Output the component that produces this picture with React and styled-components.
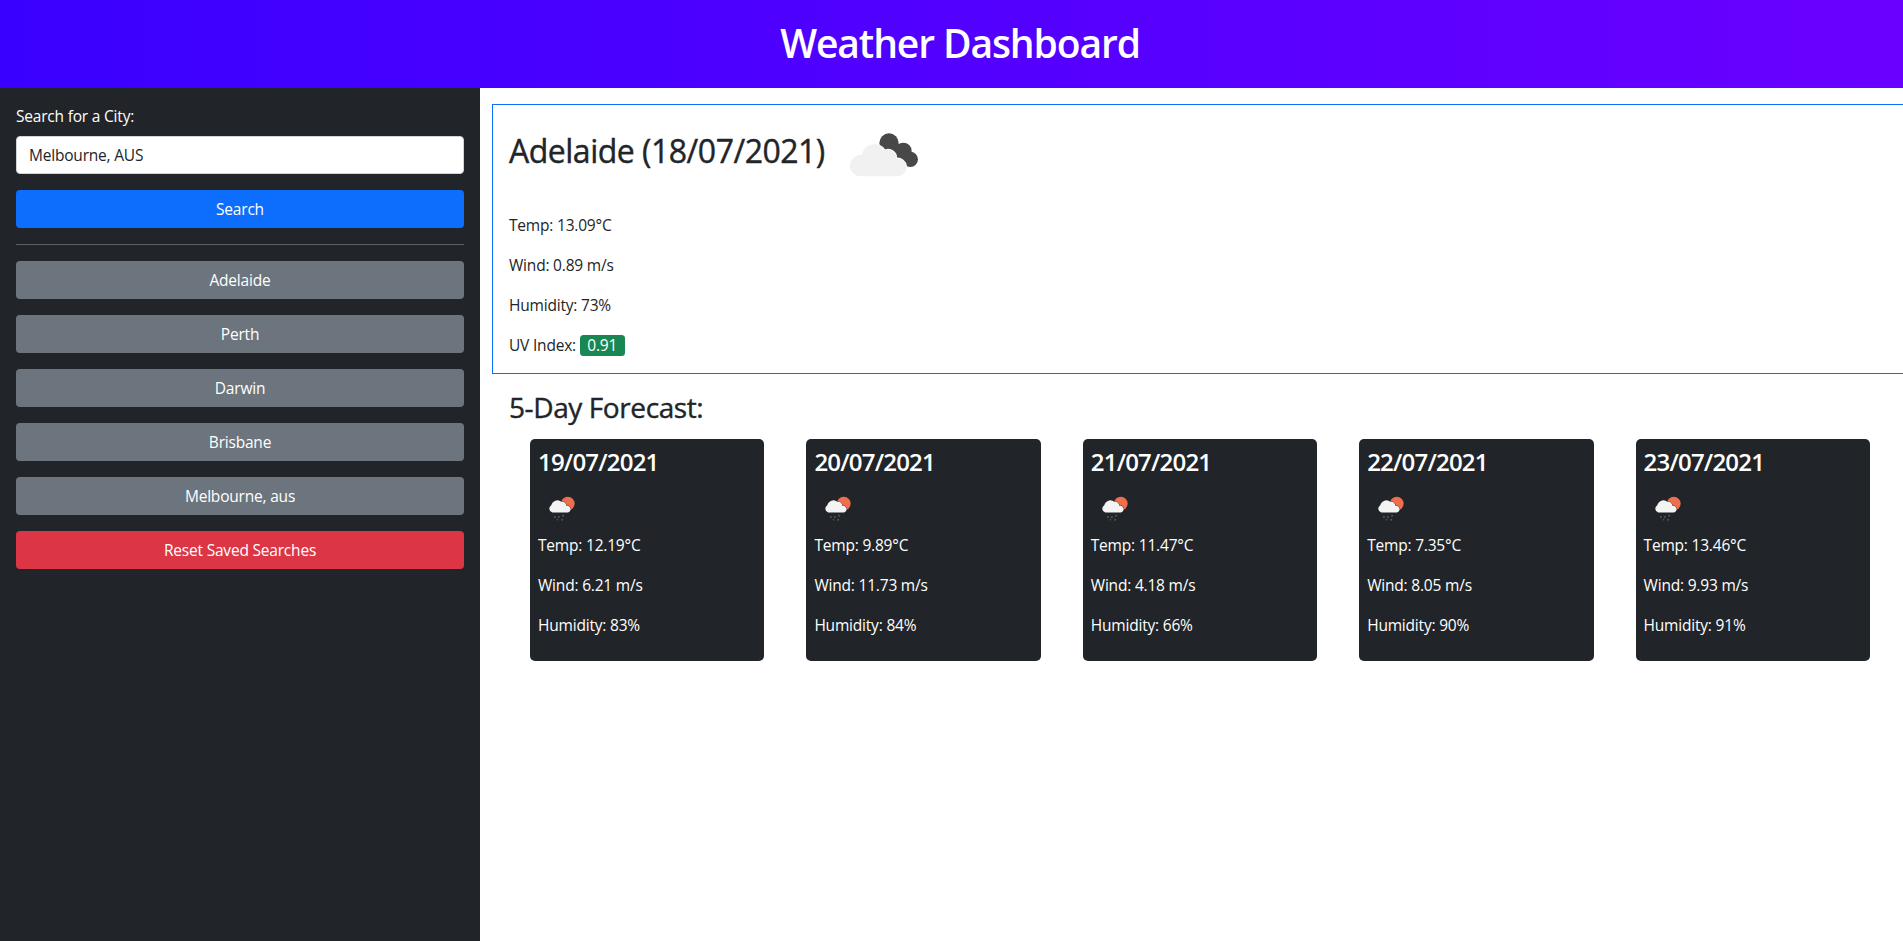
import React from 'react'
import styled, { createGlobalStyle } from 'styled-components'

const GlobalStyle = createGlobalStyle`
  html, body {
    margin: 0;
    padding: 0;
    background: #fff;
    overflow-x: hidden;
  }
  body {
    font-family: "Open Sans", "Noto Sans", "Liberation Sans", sans-serif;
    font-size: 16px;
    line-height: 24px;
    color: #212529;
  }
  * {
    box-sizing: border-box;
  }
`

const Header = styled.header`
  height: 88px;
  display: flex;
  align-items: center;
  justify-content: center;
  padding: 0 0 3px 17px;
  background: linear-gradient(90deg, #3a00ff, #6a00ff);
  h1 {
    margin: 0;
    font-size: 39px;
    line-height: 48px;
    font-weight: 600;
    color: #fff;
    letter-spacing: -1.1px;
  }
`

const Layout = styled.div`
  display: flex;
  height: 853px;
  overflow: hidden;
`

const Sidebar = styled.aside`
  flex: 0 0 480px;
  background: #212529;
  padding: 16px;
  color: #fff;
`

const Label = styled.label`
  display: block;
  height: 32px;
  font-size: 15.5px;
  letter-spacing: -0.2px;
`

const SearchInput = styled.input`
  display: block;
  width: 100%;
  height: 38px;
  padding: 0 12px;
  border: 1px solid #ced4da;
  border-radius: 4px;
  background: #fff;
  color: #212529;
  font: inherit;
  font-size: 15.5px;
  letter-spacing: -0.2px;
  margin-bottom: 16px;
`

const colors = {
  primary: '#0d6efd',
  secondary: '#6c757d',
  danger: '#dc3545'
}

const Btn = styled.button`
  display: block;
  width: 100%;
  height: 38px;
  padding: 0;
  border: 0;
  border-radius: 4px;
  background: ${props => colors[props.$kind]};
  color: #fff;
  font: inherit;
  font-size: 15.5px;
  letter-spacing: -0.2px;
  margin-bottom: 16px;
`

const Rule = styled.hr`
  height: 1px;
  margin: 16px 0;
  border: 0;
  background: #5b5e62;
`

const Main = styled.main`
  flex: 1;
  min-width: 0;
  padding: 16px 0 0 12px;
  overflow: hidden;
`

const TodayCard = styled.section`
  width: 1500px;
  height: 270px;
  padding: 16px;
  border: 1px solid #0d6efd;
`

const TitleRow = styled.div`
  display: flex;
  align-items: center;
  height: 60px;
  margin-bottom: 32px;
  h2 {
    margin: 0;
    font-size: 32px;
    line-height: 38px;
    font-weight: 400;
    letter-spacing: -0.5px;
    -webkit-text-stroke: 0.4px #212529;
  }
  svg {
    margin: 8px 0 0 24px;
  }
`

const Line = styled.p`
  margin: 0 0 16px;
  font-size: 15.5px;
  letter-spacing: -0.2px;
`

const Badge = styled.span`
  display: inline-block;
  height: 21px;
  line-height: 21px;
  padding: 0 7.5px;
  border-radius: 3.5px;
  background: #198754;
  color: #fff;
`

const ForecastTitle = styled.h3`
  margin: 16px 0 15px 17px;
  font-size: 28px;
  line-height: 34px;
  font-weight: 400;
  letter-spacing: -0.4px;
  -webkit-text-stroke: 0.4px #212529;
`

const ForecastRow = styled.div`
  display: grid;
  grid-template-columns: repeat(5, 234.4px);
  column-gap: 42px;
  padding-left: 38px;
`

const DayCard = styled.article`
  height: 222px;
  padding: 8px;
  border-radius: 5px;
  background: #212529;
  color: #fff;
  h4 {
    margin: 0 0 8px;
    font-size: 24px;
    line-height: 29px;
    font-weight: 600;
    letter-spacing: -0.8px;
  }
`

const DayIcon = styled.div`
  height: 49px;
  padding: 11px 0 0 9px;
  svg {
    display: block;
  }
`

const CloudsIcon = () => (
  <svg width="70" height="44" viewBox="30 70 210 132">
    <g fill="#484849">
      <circle cx="150" cy="100" r="29" />
      <circle cx="193" cy="124" r="25" />
      <circle cx="214" cy="149" r="23" />
      <path d="M125 95 L190 105 L225 165 L170 160 Z" />
    </g>
    <path
      d="M62 200 A32 32 0 0 1 68 136 A38 38 0 0 1 138 122 A24 24 0 0 1 172 146 A27 27 0 0 1 178 200 Z"
      fill="#f1f1f1"
      stroke="#fff"
      strokeWidth="4"
      paintOrder="stroke"
    />
  </svg>
)

const RainSunIcon = () => (
  <svg width="28" height="27" viewBox="40 30 85 80">
    <circle cx="103" cy="55" r="21" fill="#ee6e4d" />
    <path
      d="M56 82 A12 12 0 0 1 53 60 A19 19 0 0 1 84 50 A11 11 0 0 1 98 62 A10 10 0 0 1 104 82 Z"
      fill="#f4f4f4"
      stroke="#212529"
      strokeWidth="2"
      paintOrder="stroke"
    />
    <g fill="#55585c">
      <circle cx="64" cy="96" r="3" />
      <circle cx="76" cy="96" r="3" />
      <circle cx="89" cy="92" r="3" />
      <circle cx="72" cy="104" r="2.5" />
      <circle cx="86" cy="104" r="3" />
    </g>
  </svg>
)

const history = ['Adelaide', 'Perth', 'Darwin', 'Brisbane', 'Melbourne, aus']

const forecast = [
  { date: '19/07/2021', temp: '12.19', wind: '6.21', humidity: 83 },
  { date: '20/07/2021', temp: '9.89', wind: '11.73', humidity: 84 },
  { date: '21/07/2021', temp: '11.47', wind: '4.18', humidity: 66 },
  { date: '22/07/2021', temp: '7.35', wind: '8.05', humidity: 90 },
  { date: '23/07/2021', temp: '13.46', wind: '9.93', humidity: 91 }
]

export default function App () {
  return (
    <>
      <GlobalStyle />
      <Header>
        <h1>Weather Dashboard</h1>
      </Header>
      <Layout>
        <Sidebar>
          <Label htmlFor='city'>Search for a City:</Label>
          <SearchInput id='city' defaultValue='Melbourne, AUS' />
          <Btn $kind='primary'>Search</Btn>
          <Rule />
          {history.map(city => <Btn $kind='secondary' key={city}>{city}</Btn>)}
          <Btn $kind='danger'>Reset Saved Searches</Btn>
        </Sidebar>
        <Main>
          <TodayCard>
            <TitleRow>
              <h2>Adelaide (18/07/2021)</h2>
              <CloudsIcon />
            </TitleRow>
            <Line>Temp: 13.09°C</Line>
            <Line>Wind: 0.89 m/s</Line>
            <Line>Humidity: 73%</Line>
            <Line>UV Index: <Badge>0.91</Badge></Line>
          </TodayCard>
          <ForecastTitle>5-Day Forecast:</ForecastTitle>
          <ForecastRow>
            {forecast.map(day => (
              <DayCard key={day.date}>
                <h4>{day.date}</h4>
                <DayIcon><RainSunIcon /></DayIcon>
                <Line>Temp: {day.temp}°C</Line>
                <Line>Wind: {day.wind} m/s</Line>
                <Line>Humidity: {day.humidity}%</Line>
              </DayCard>
            ))}
          </ForecastRow>
        </Main>
      </Layout>
    </>
  )
}
